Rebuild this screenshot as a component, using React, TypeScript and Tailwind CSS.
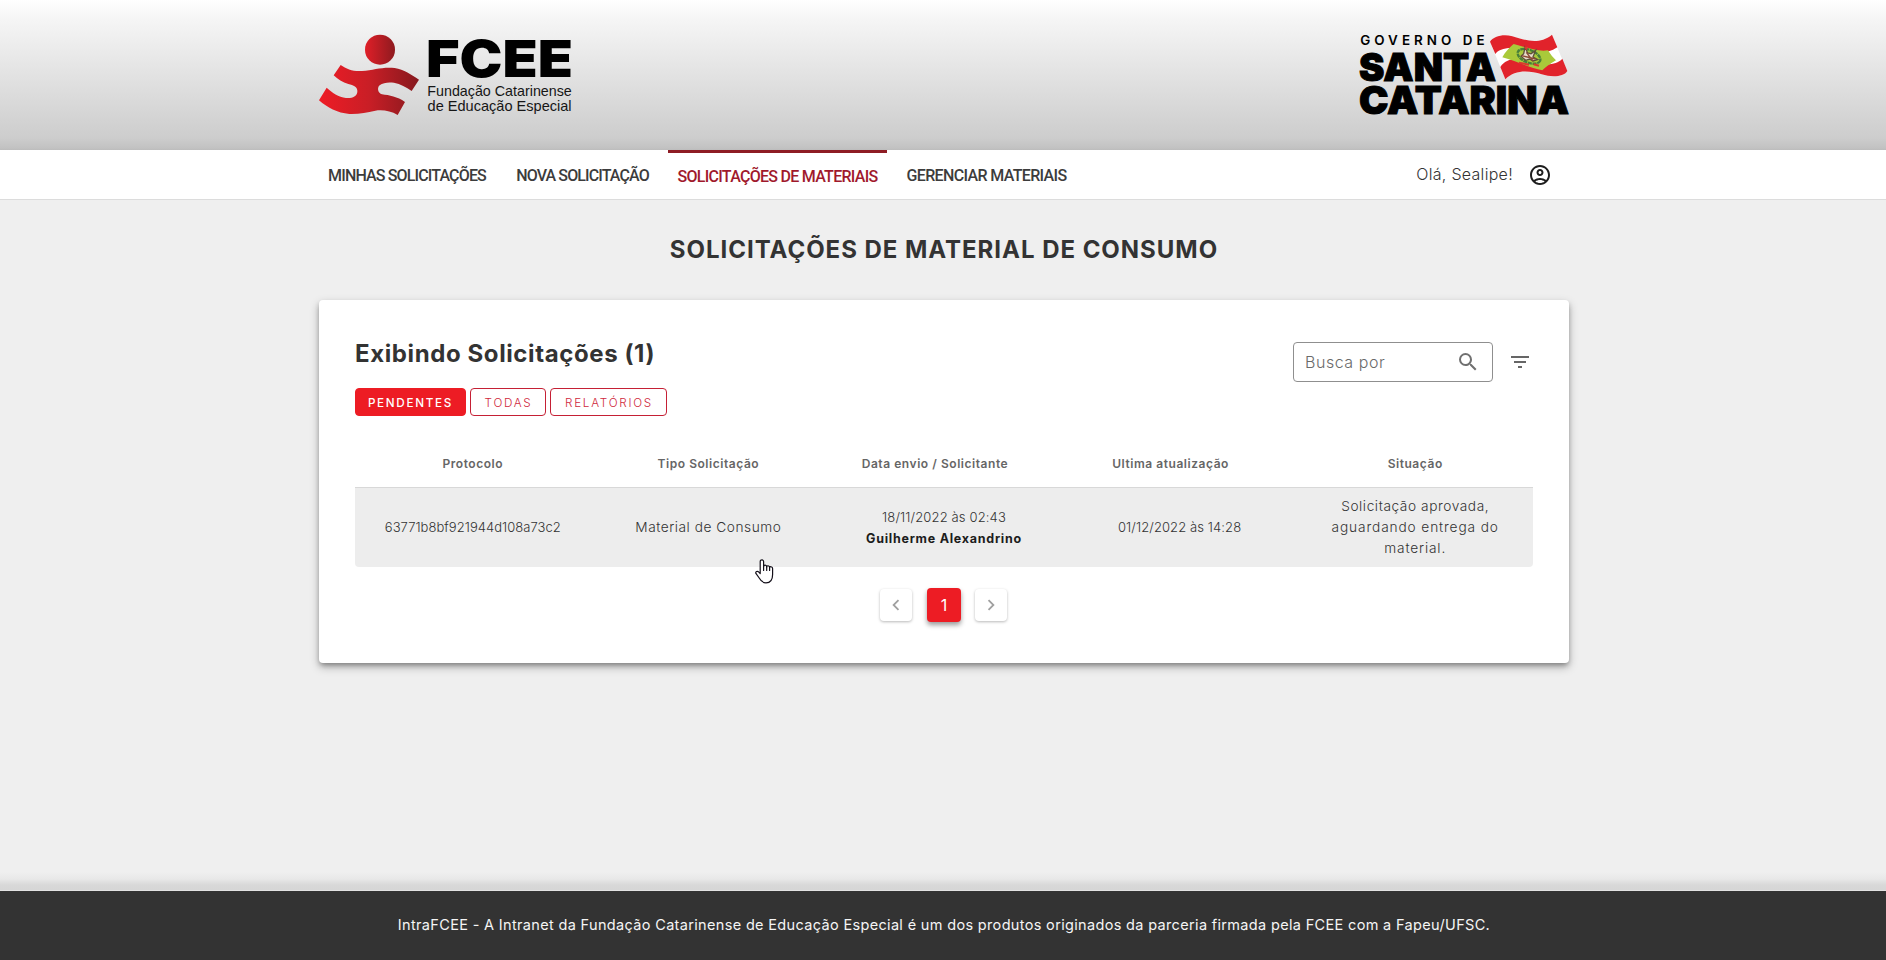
import type { ReactNode } from "react";

const INTER = "font-['Inter',sans-serif]";

function FceeLogo() {
  return (
    <svg className="overflow-visible" width="256" height="84" viewBox="0 0 256 84" role="img" aria-label="FCEE">
      <defs>
        <linearGradient id="fcee-head" x1="0" x2="1" y1="0" y2="0">
          <stop offset="0" stopColor="#e01f28" />
          <stop offset="1" stopColor="#8e1a1f" />
        </linearGradient>
        <linearGradient id="fcee-body" x1="0" x2="1" y1="0" y2="0">
          <stop offset="0" stopColor="#ee1c25" />
          <stop offset="0.5" stopColor="#c91e26" />
          <stop offset="1" stopColor="#86191e" />
        </linearGradient>
      </defs>
      <circle cx="61" cy="15.7" r="15" fill="url(#fcee-head)" />
      <g transform="translate(-19 -14) scale(0.33333)">
        <path
          fill="url(#fcee-body)"
          d="M122 135 C140 148 160 155 186 153 C222 150 248 140 284 144 C312 149 334 164 357 179 L335 213 C318 201 302 192 282 188 C266 186 250 187 239 196 C230 204 234 220 246 223 C268 226 292 230 315 246 L293 285 C272 273 250 269 226 272 C200 277 178 283 148 282 C112 279 82 263 57 241 L80 203 C96 218 116 231 138 234 C156 236 170 230 172 216 C174 201 160 195 145 192 C128 187 113 178 101 166 Z"
        />
      </g>
      <text x="108.3" y="62.4" fontFamily="Liberation Sans, sans-serif" fontSize="13.9" textLength="144.5" lengthAdjust="spacingAndGlyphs" fill="#161616">Fundação Catarinense</text>
      <text x="108.6" y="76.7" fontFamily="Liberation Sans, sans-serif" fontSize="13.9" textLength="144" lengthAdjust="spacingAndGlyphs" fill="#161616">de Educação Especial</text>
      <text x="107" y="42.8" fontFamily="Inter, sans-serif" fontSize="51.5" fontWeight="900" textLength="147" lengthAdjust="spacingAndGlyphs" fill="#000">FCEE</text>
    </svg>
  );
}

function StateLogo() {
  return (
    <svg className="overflow-visible" width="210" height="84" viewBox="0 0 210 84" role="img" aria-label="Governo de Santa Catarina">
      <g fontFamily="Inter, sans-serif" fill="#000">
        <text x="1.2" y="11.2" fontSize="13.4" fontWeight="600" textLength="124.5" lengthAdjust="spacing">GOVERNO DE</text>
        <text x="0" y="46.6" fontSize="38" fontWeight="900" textLength="137" lengthAdjust="spacingAndGlyphs" stroke="#000" strokeWidth="1">SANTA</text>
        <text x="0" y="80.4" fontSize="38" fontWeight="900" textLength="210" lengthAdjust="spacingAndGlyphs" stroke="#000" strokeWidth="1">CATARINA</text>
      </g>
      <g transform="translate(126 -9) scale(0.33333)">
        <path fill="#fff" d="M15 50 C25 34 55 26 82 34 C118 44 160 62 201 29 L246 137 C236 156 200 158 170 148 C130 136 90 134 61 163 Z" />
        <path fill="#e1232b" d="M15 50 C25 34 55 26 82 34 C118 44 160 62 201 29 L217 67 C180 92 145 82 105 72 C70 64 40 72 31 87 Z" />
        <path fill="#e1232b" d="M46 126 C62 100 95 97 130 108 C170 119 210 125 232 101 L247 138 C236 156 200 158 170 148 C130 136 90 134 61 163 Z" />
        <path fill="#a9c93a" d="M52 97 C60 82 74 66 86 57 C124 66 160 82 189 76 C196 88 204 98 213 106 C196 116 182 126 172 136 C134 128 92 108 52 97 Z" />
        <ellipse cx="132" cy="94" rx="36" ry="19" transform="rotate(22 132 94)" fill="none" stroke="#47803a" strokeWidth="7" strokeDasharray="12 2" />
        <path d="M108 94 L116 86 L120 67 L128 84 L138 86 L152 76 L144 96 L158 104 L144 108 L134 102 L122 106 Z" fill="#e6dccb" stroke="#5c5138" strokeWidth="4" />
        <path d="M110 92 L152 102 M124 82 L144 108" stroke="#8a4a34" strokeWidth="4" />
        <path d="M102 113 L132 119 M146 118 L162 122 M120 66 L126 73" stroke="#d8392f" strokeWidth="6" />
      </g>
    </svg>
  );
}

function Icon({ d, size = 24, className = "" }: { d: string; size?: number; className?: string }) {
  return (
    <svg viewBox="0 0 24 24" width={size} height={size} fill="currentColor" className={className} aria-hidden="true">
      <path d={d} />
    </svg>
  );
}

const ICONS = {
  account:
    "M12 2C6.48 2 2 6.48 2 12s4.48 10 10 10 10-4.48 10-10S17.52 2 12 2zM7.35 18.5C8.66 17.56 10.26 17 12 17s3.34.56 4.65 1.5C15.34 19.44 13.74 20 12 20s-3.34-.56-4.65-1.5zm10.79-1.38C16.45 15.8 14.32 15 12 15s-4.45.8-6.14 2.12C4.7 15.73 4 13.95 4 12c0-4.42 3.58-8 8-8s8 3.58 8 8c0 1.95-.7 3.73-1.86 5.12zM12 6c-1.93 0-3.5 1.57-3.5 3.5S10.07 13 12 13s3.5-1.57 3.5-3.5S13.93 6 12 6zm0 5c-.83 0-1.5-.67-1.5-1.5S11.17 8 12 8s1.5.67 1.5 1.5S12.83 11 12 11z",
  search:
    "M9.5,3A6.5,6.5 0 0,1 16,9.5C16,11.11 15.41,12.59 14.44,13.73L14.71,14H15.5L20.5,19L19,20.5L14,15.5V14.71L13.73,14.44C12.59,15.41 11.11,16 9.5,16A6.5,6.5 0 0,1 3,9.5A6.5,6.5 0 0,1 9.5,3M9.5,5C7,5 5,7 5,9.5C5,12 7,14 9.5,14C12,14 14,12 14,9.5C14,7 12,5 9.5,5Z",
  filter: "M6,13H18V11H6M3,6V8H21V6M10,18H14V16H10V18Z",
  left: "M15.41,16.58L10.83,12L15.41,7.41L14,6L8,12L14,18L15.41,16.58Z",
  right: "M8.59,16.58L13.17,12L8.59,7.41L10,6L16,12L10,18L8.59,16.58Z",
};

const NAV = [
  { label: "MINHAS SOLICITAÇÕES", className: "w-[178px] pr-[2px] tracking-[-0.85px]" },
  { label: "NOVA SOLICITAÇÃO", className: "w-[151px] tracking-[-0.88px]" },
  { label: "SOLICITAÇÕES DE MATERIAIS", className: "w-[219px] tracking-[-0.72px]", active: true },
  { label: "GERENCIAR MATERIAIS", className: "w-[179px] tracking-[-0.65px]" },
];

function HeaderCell({ children, sortable = false }: { children: ReactNode; sortable?: boolean }) {
  return (
    <div className={"pb-[2px] text-center text-[12px] leading-[18px] font-semibold tracking-[0.55px] text-[#666] " + (sortable ? "pr-[18px]" : "")}>
      {children}
    </div>
  );
}

function HandCursor() {
  return (
    <svg className="pointer-events-none absolute top-[559px] left-[755px]" width="19" height="25" viewBox="0 0 19 25" aria-hidden="true">
      <path
        d="M5.2 14.5V2.6C5.2 0.2 8.6 0.2 8.6 2.6V7.6C8.6 5.6 11.7 5.7 11.7 7.9C11.7 6.2 14.6 6.3 14.6 8.6C14.6 7.2 17.6 7.4 17.6 9.6V15.4C17.6 20.4 15.2 23.8 11 23.8C7.2 23.8 5.6 21.6 4.2 19L0.9 14.4C0.2 12.8 2.4 11.6 3.6 12.9Z"
        fill="#fff"
        stroke="#14101a"
        strokeWidth="1.2"
        strokeLinejoin="round"
      />
      <path d="M8.6 7V11.5M11.7 7.8V11.5M14.6 8.5V11.5" stroke="#14101a" strokeWidth="1.2" strokeLinecap="round" />
    </svg>
  );
}

export default function App() {
  return (
    <div className={`relative flex h-[960px] w-full flex-col overflow-hidden bg-[#efefef] text-[#333] ${INTER}`}>
      <header className="h-[150px] shrink-0 bg-[linear-gradient(to_bottom,#fff_0px,#f5f5f5_20px,#cdcdcd_138px,#c2c2c2_148px,#bcbcbc_150px)]">
        <div className="ml-[319px] flex w-[1250px] justify-between pt-[34px]">
          <FceeLogo />
          <StateLogo />
        </div>
      </header>

      <nav className="h-[50px] shrink-0 border-b border-[#dcdcdc] bg-white">
        <div className="ml-[319px] flex h-full w-[1250px] items-start">
          <div className="flex h-full gap-[10px] font-['Roboto',sans-serif] text-[16px] leading-[24px] font-medium whitespace-nowrap">
            {NAV.map((item) => (
              <a
                key={item.label}
                className={
                  item.className +
                  " block h-full text-center " +
                  (item.active ? "border-t-[3px] border-[#8e1c24] pt-[12px] text-[#a0192c]" : "pt-[14px] text-[#3c3c3c]")
                }
              >
                {item.label}
              </a>
            ))}
          </div>
          <div className="ml-auto flex h-full items-center pr-[17px]">
            <span className="mr-[15px] pb-px text-[16px] leading-[24px] font-light tracking-[0.3px]">Olá, Sealipe!</span>
            <Icon d={ICONS.account} className="text-[#1e1e1e]" />
          </div>
        </div>
      </nav>

      <main className="flex-1">
        <h1 className="mt-[33px] pl-[2px] text-center text-[24px] leading-[34px] font-bold tracking-[0.97px]">
          SOLICITAÇÕES DE MATERIAL DE CONSUMO
        </h1>

        <section className="mt-[33px] ml-[319px] h-[363px] w-[1250px] rounded-[4px] bg-white px-[36px] pt-[36px] shadow-[0_3px_5px_-1px_rgba(0,0,0,0.3),0_4px_10px_0_rgba(0,0,0,0.28)]">
          <div className="flex h-[80px] justify-between">
            <div>
              <h2 className="pt-px text-[24px] leading-[34px] font-bold tracking-[0.6px]">Exibindo Solicitações (1)</h2>
              <div className="mt-[17px] flex gap-[4px] text-[11.7px] leading-[26px]">
                <button className="h-[28px] w-[111px] rounded-[4px] border border-[#ed1c24] bg-[#ed1c24] pt-px font-medium tracking-[1.7px] text-white">
                  PENDENTES
                </button>
                <button className="h-[28px] w-[76px] rounded-[4px] border border-[#c52035] pt-px pl-px font-light tracking-[1.7px] text-[#d0283c]">
                  TODAS
                </button>
                <button className="h-[28px] w-[117px] rounded-[4px] border border-[#c52035] pt-px pl-px font-light tracking-[1.75px] text-[#d0283c]">
                  RELATÓRIOS
                </button>
              </div>
            </div>
            <div className="flex items-start pt-[6px]">
              <label className="flex h-[40px] w-[200px] items-center justify-between rounded-[4px] border border-[#8f8f8f] pr-[12px] pl-[11px]">
                <span className="pb-px text-[16px] leading-[24px] font-light tracking-[0.55px] text-[#6a6a6a]">Busca por</span>
                <Icon d={ICONS.search} className="text-[#707070]" />
              </label>
              <Icon d={ICONS.filter} className="mt-[8px] mr-px ml-[15px] text-[#666]" />
            </div>
          </div>

          <div className="mt-[26px] grid h-[46px] grid-cols-5 items-center border-b border-[#d8d8d8]">
            <HeaderCell>Protocolo</HeaderCell>
            <HeaderCell>Tipo Solicitação</HeaderCell>
            <HeaderCell sortable>Data envio / Solicitante</HeaderCell>
            <HeaderCell sortable>Ultima atualização</HeaderCell>
            <HeaderCell>Situação</HeaderCell>
          </div>
          <div className="grid h-[79px] grid-cols-5 items-center rounded-b-[4px] bg-[#ededed] text-center text-[13px] leading-[21px] font-light">
            <div className="tracking-[0.04px]">63771b8bf921944d108a73c2</div>
            <div className="text-[13.7px] tracking-[0.54px]">Material de Consumo</div>
            <div>
              <div className="tracking-[0.14px]">18/11/2022 às 02:43</div>
              <div className="text-[12.5px] font-bold tracking-[0.74px] text-[#1c1c1c]">Guilherme Alexandrino</div>
            </div>
            <div className="tracking-[0.1px]">01/12/2022 às 14:28</div>
            <div className="text-[13.7px]">
              <div className="tracking-[0.58px]">Solicitação aprovada,</div>
              <div className="tracking-[0.88px]">aguardando entrega do</div>
              <div className="tracking-[0.85px]">material.</div>
            </div>
          </div>

          <div className="mt-[21px] flex h-[34px] items-center justify-center gap-[14px] pr-px">
            <button className="mr-px flex size-[32px] items-center justify-center rounded-[4px] bg-white text-[#a0a0a0] shadow-[0_1px_3px_rgba(0,0,0,0.28)]">
              <Icon d={ICONS.left} size={22} />
            </button>
            <button className="size-[34px] rounded-[4px] bg-[#ed1c24] text-[16px] leading-[32px] text-white shadow-[0_3px_5px_rgba(0,0,0,0.4)]">
              1
            </button>
            <button className="flex size-[32px] items-center justify-center rounded-[4px] bg-white text-[#a0a0a0] shadow-[0_1px_3px_rgba(0,0,0,0.28)]">
              <Icon d={ICONS.right} size={22} />
            </button>
          </div>
        </section>
      </main>

      <div className="h-[19px] shrink-0 bg-[linear-gradient(to_bottom,#efefef_0px,#e8e8e8_7px,#d8d8d8_13px,#d6d6d6_18px,#e2e2e2_18px)]" />
      <footer className="h-[69px] shrink-0 bg-[#333] pt-[22px] pl-[2px] text-center text-[14.5px] leading-[24px] font-normal tracking-[0.335px] text-[#f5f5f5]">
        IntraFCEE - A Intranet da Fundação Catarinense de Educação Especial é um dos produtos originados da parceria firmada pela FCEE com a Fapeu/UFSC.
      </footer>

      <HandCursor />
    </div>
  );
}
